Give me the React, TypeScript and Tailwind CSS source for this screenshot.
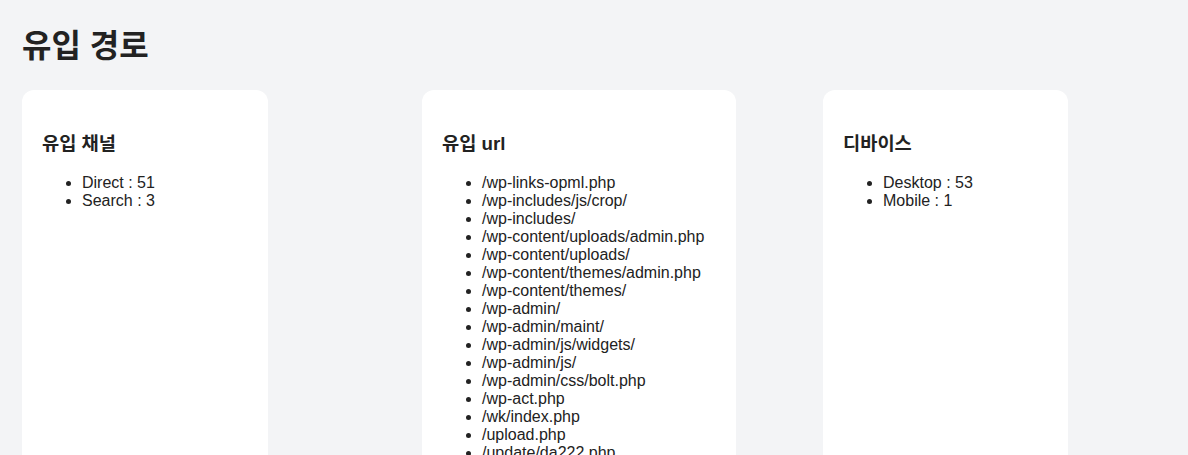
import React from "react";

const urls = [
  "/wp-links-opml.php",
  "/wp-includes/js/crop/",
  "/wp-includes/",
  "/wp-content/uploads/admin.php",
  "/wp-content/uploads/",
  "/wp-content/themes/admin.php",
  "/wp-content/themes/",
  "/wp-admin/",
  "/wp-admin/maint/",
  "/wp-admin/js/widgets/",
  "/wp-admin/js/",
  "/wp-admin/css/bolt.php",
  "/wp-act.php",
  "/wk/index.php",
  "/upload.php",
  "/update/da222.php",
  "/tmp/index.php",
  "/index.php",
];

function Card({ title, items, w }: { title: string; items: string[]; w: string }) {
  return (
    <div className={`bg-white rounded-xl px-5 pt-[43px] pb-5 ${w}`}>
      <h3 className="text-[18.72px] font-bold leading-[22px] m-0">{title}</h3>
      <ul className="list-disc pl-10 mt-[19px] text-[16px] leading-[18px]">
        {items.map((t) => (
          <li key={t}>{t}</li>
        ))}
      </ul>
    </div>
  );
}

export default function App() {
  return (
    <div
      className="min-h-[455px] bg-[#f3f4f6] text-[#222] px-[22px] pt-[26px]"
      style={{ fontFamily: '"Liberation Sans", Arial, "Noto Sans CJK KR", sans-serif' }}
    >
      <h1 className="text-[32px] font-bold leading-[40px] m-0">유입 경로</h1>
      <div className="grid grid-cols-[380px_381px_380px] gap-5 mt-6 justify-items-start">
        <Card title="유입 채널" items={["Direct : 51", "Search : 3"]} w="w-[246px]" />
        <Card title="유입 url" items={urls} w="w-[314px]" />
        <Card title="디바이스" items={["Desktop : 53", "Mobile : 1"]} w="w-[245px]" />
      </div>
    </div>
  );
}
